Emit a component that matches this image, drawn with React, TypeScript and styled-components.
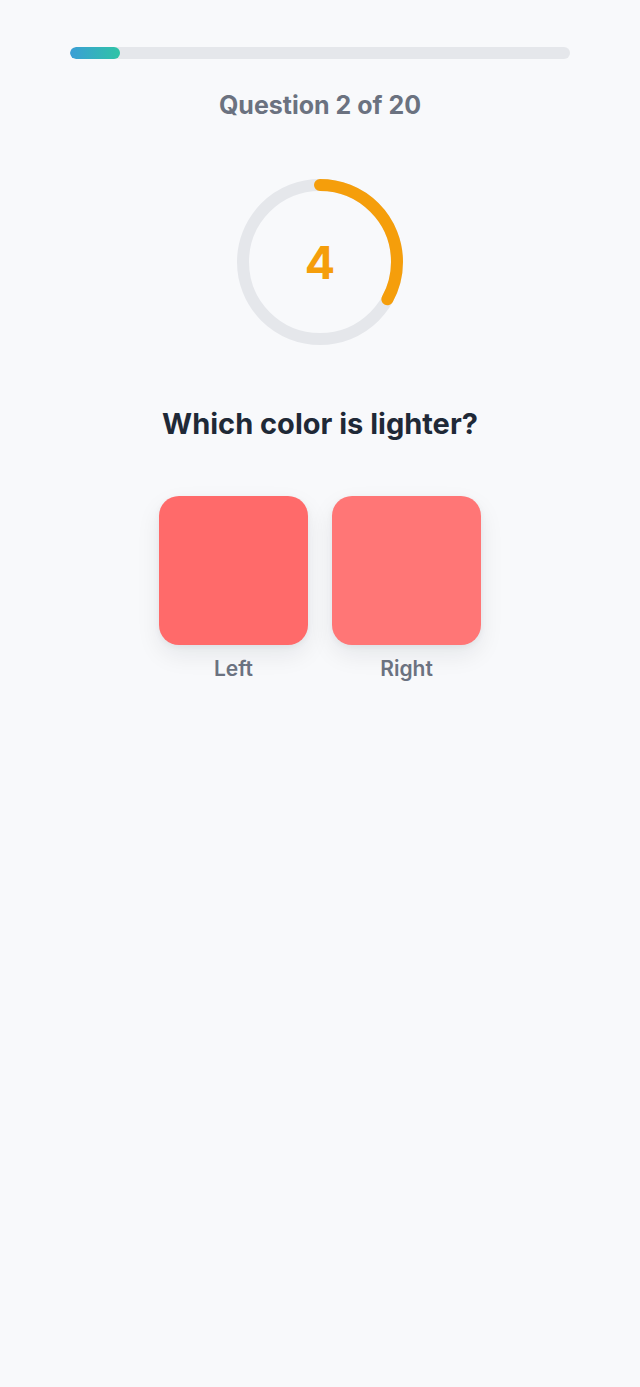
import React from 'react'
import styled, { createGlobalStyle } from 'styled-components'

const GlobalStyle = createGlobalStyle`
  html, body {
    margin: 0;
    padding: 0;
    background: #f8f9fb;
  }
  body {
    font-family: Inter, "Liberation Sans", Arial, sans-serif;
    -webkit-font-smoothing: antialiased;
  }
`

const Page = styled.div`
  display: flex;
  flex-direction: column;
  align-items: center;
  min-height: 1387px;
  padding: 47px 70px 0;
  box-sizing: border-box;
  background: #f8f9fb;
`

const Track = styled.div`
  width: 100%;
  height: 12px;
  border-radius: 6px;
  background: #e5e7eb;
  overflow: hidden;
`

const Fill = styled.div`
  height: 100%;
  border-radius: 6px;
  background: linear-gradient(90deg, #3b9ed6 0%, #2fc4a6 100%);
`

const Counter = styled.h2`
  margin: 31px 0 0;
  font-size: 25px;
  line-height: 30px;
  font-weight: 700;
  color: #6b7280;
`

const Timer = styled.div`
  position: relative;
  width: 170px;
  height: 170px;
  margin-top: 57px;
`

const TimerValue = styled.span`
  position: absolute;
  inset: 0;
  display: flex;
  align-items: center;
  justify-content: center;
  font-size: 45px;
  font-weight: 700;
  color: #f59e0b;
`

const Prompt = styled.h1`
  margin: 60px 0 0;
  font-size: 29px;
  line-height: 34px;
  font-weight: 700;
  color: #1f2937;
`

const Choices = styled.div`
  display: flex;
  gap: 24px;
  margin-top: 55px;
`

const Choice = styled.button`
  display: flex;
  flex-direction: column;
  align-items: center;
  gap: 12px;
  padding: 0;
  border: none;
  background: none;
  cursor: pointer;
  font-family: inherit;
`

const Swatch = styled.div<{ $color: string }>`
  width: 149px;
  height: 149px;
  border-radius: 20px;
  background: ${(p) => p.$color};
  box-shadow: 0 10px 24px rgba(17, 24, 39, 0.08), 0 2px 6px rgba(17, 24, 39, 0.05);
`

const Label = styled.span`
  font-size: 21px;
  line-height: 24px;
  font-weight: 600;
  color: #6b7280;
`

const RADIUS = 77
const CIRC = 2 * Math.PI * RADIUS

function CountdownRing({ fraction, value }: { fraction: number; value: number }) {
  return (
    <Timer>
      <svg width="170" height="170" viewBox="0 0 170 170">
        <circle cx="85" cy="85" r={RADIUS} fill="none" stroke="#e5e7eb" strokeWidth="12" />
        <circle
          cx="85"
          cy="85"
          r={RADIUS}
          fill="none"
          stroke="#f59e0b"
          strokeWidth="12"
          strokeLinecap="round"
          strokeDasharray={`${CIRC * fraction} ${CIRC}`}
          transform="rotate(-90 85 85)"
        />
      </svg>
      <TimerValue>{value}</TimerValue>
    </Timer>
  )
}

const App = () => {
  const current = 2
  const total = 20
  return (
    <Page>
      <GlobalStyle />
      <Track>
        <Fill style={{ width: `${(current / total) * 100}%` }} />
      </Track>
      <Counter>
        Question {current} of {total}
      </Counter>
      <CountdownRing fraction={0.33} value={4} />
      <Prompt>Which color is lighter?</Prompt>
      <Choices>
        <Choice>
          <Swatch $color="#ff6a6a" />
          <Label>Left</Label>
        </Choice>
        <Choice>
          <Swatch $color="#ff7676" />
          <Label>Right</Label>
        </Choice>
      </Choices>
    </Page>
  )
}

export default App
